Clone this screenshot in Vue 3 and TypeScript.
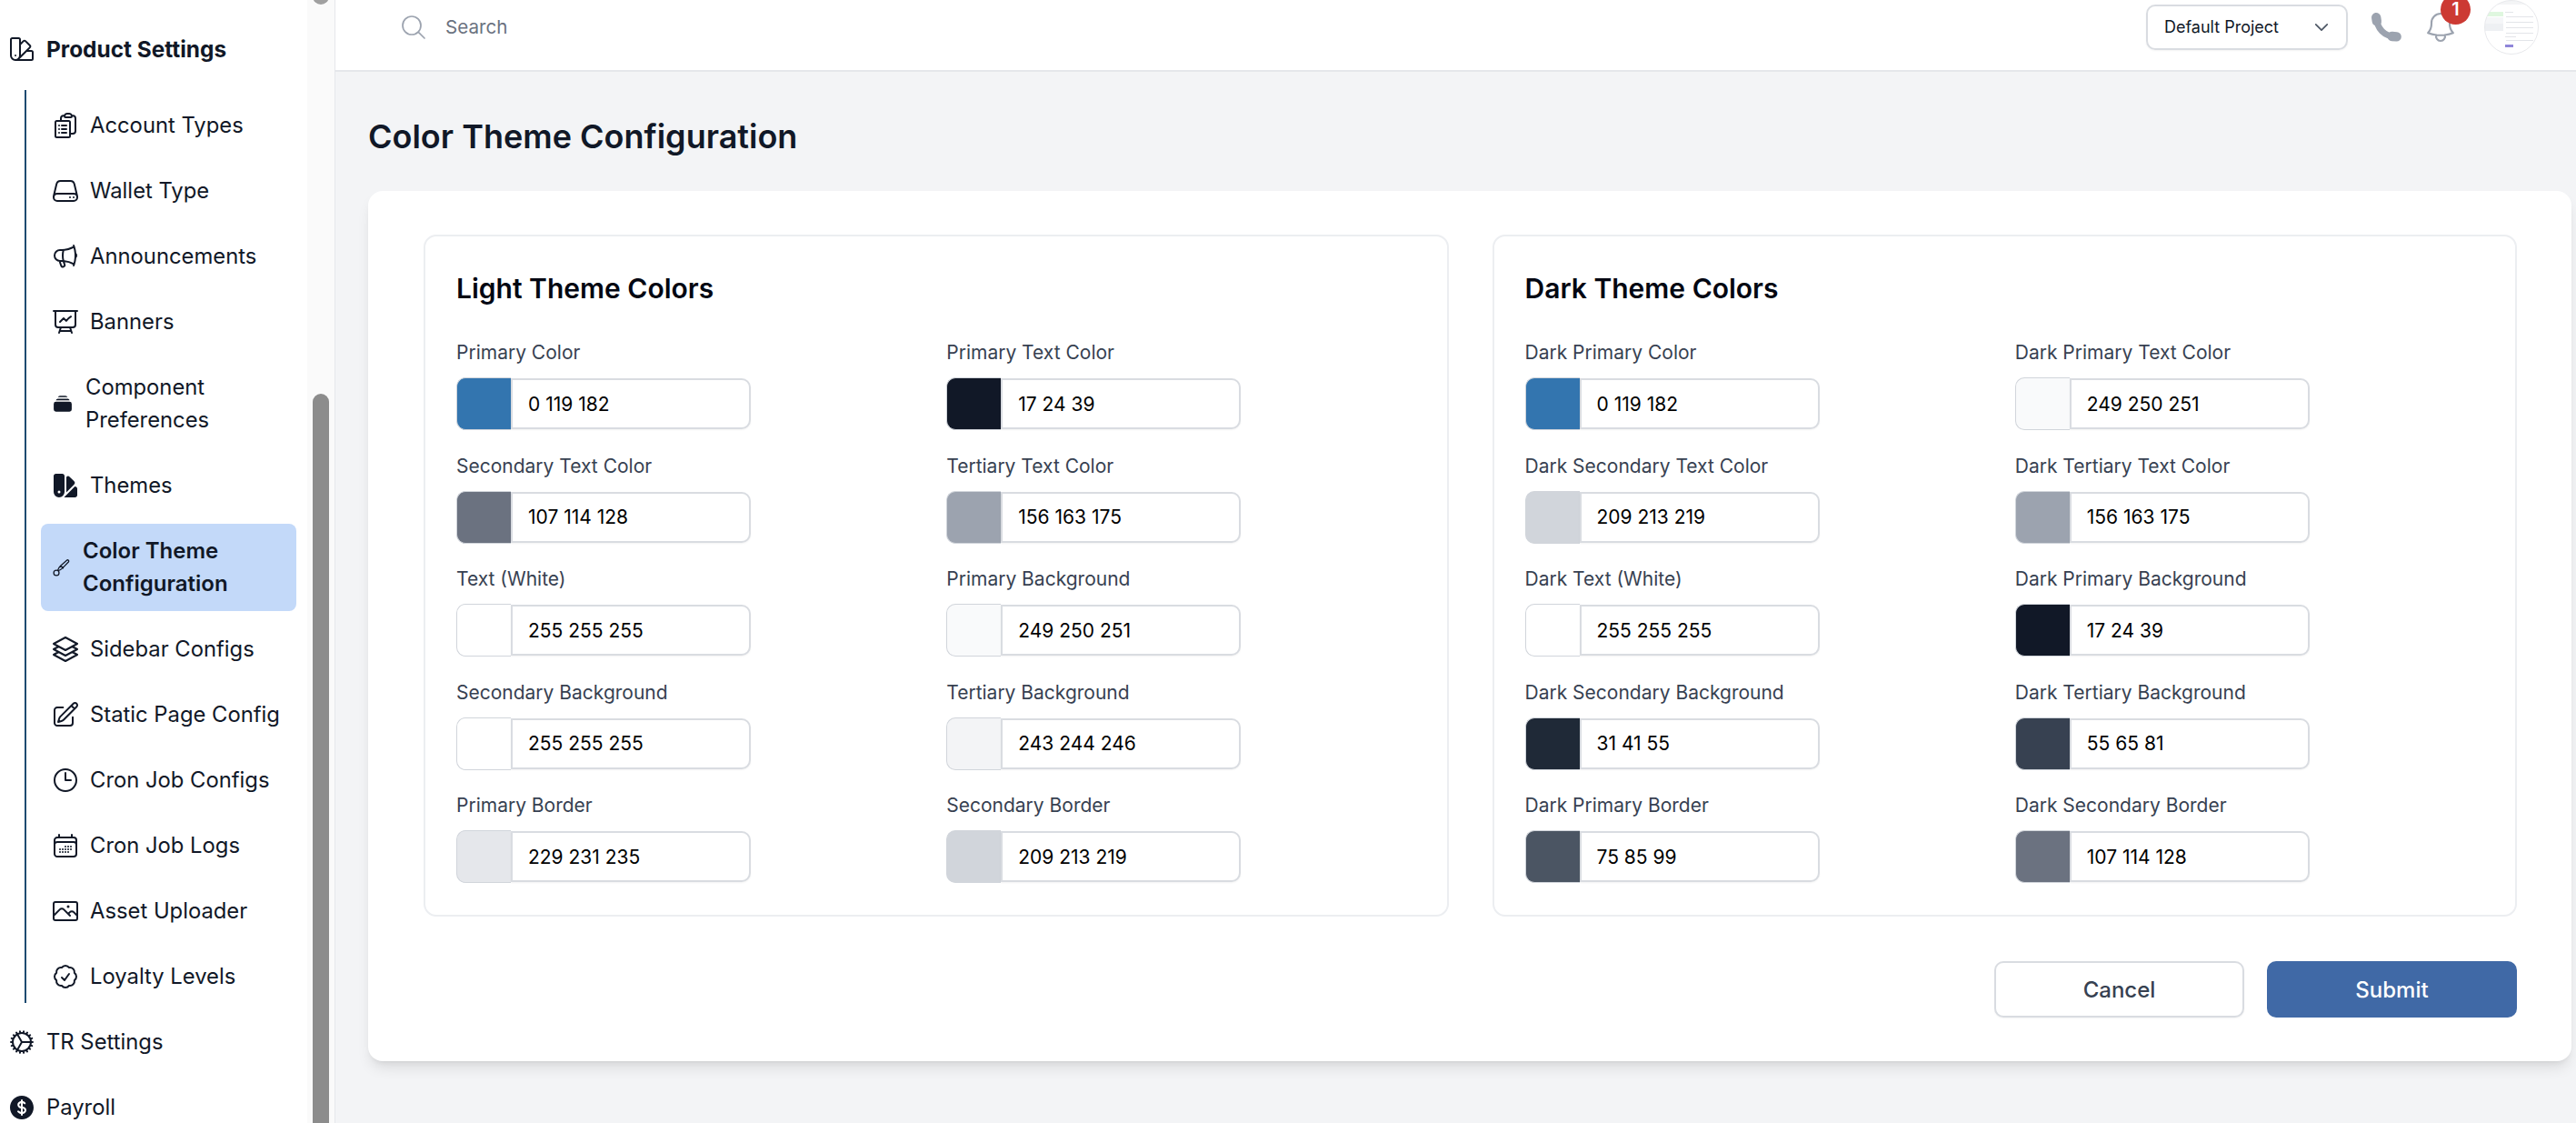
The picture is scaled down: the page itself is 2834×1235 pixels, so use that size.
<template>
  <div class="shell">
    <aside class="sidebar">
      <div class="nav-top bold">
        <svg class="ico" viewBox="0 0 24 24"><path :d="icons.swatch" /></svg>
        <span>Product Settings</span>
      </div>
      <div class="subnav">
        <div
          v-for="item in subItems"
          :key="item.label"
          :class="['nav-sub', item.cls]"
        >
          <svg v-if="item.icon" class="ico" viewBox="0 0 24 24"><path :d="item.icon" /></svg>
          <svg v-else-if="item.cls === 'stack'" class="ico-solid" viewBox="0 0 20 20"><path :d="icons.stack" /></svg>
          <svg v-else-if="item.cls === 'themes'" class="ico-fill" viewBox="0 0 24 24"><path :d="icons.swatchA" fill-rule="evenodd" /><path :d="icons.swatchB" /><path :d="icons.swatchC" /></svg>
          <svg v-else class="ico-brush" viewBox="0 0 24 24"><path :d="icons.brush" /></svg>
          <span>{{ item.label }}</span>
        </div>
      </div>
      <div class="nav-top">
        <svg class="ico" viewBox="0 0 24 24"><path :d="icons.cog" /></svg>
        <span>TR Settings</span>
      </div>
      <div class="nav-top">
        <svg class="ico-fill" viewBox="0 0 24 24"><path :d="icons.dollarA" /><path :d="icons.dollarB" fill-rule="evenodd" /></svg>
        <span>Payroll</span>
      </div>
      <div class="track">
        <div class="thumb thumb-old"></div>
        <div class="thumb thumb-main"></div>
      </div>
    </aside>

    <div class="main">
      <header class="topbar">
        <svg class="search-ico" viewBox="0 0 24 24"><path d="M21 21l-5.197-5.197m0 0A7.5 7.5 0 105.196 5.196a7.5 7.5 0 0010.607 10.607z" /></svg>
        <span class="search-text">Search</span>
        <div class="project">
          <span>Default Project</span>
          <svg viewBox="0 0 24 24"><path d="M19.5 8.25l-7.5 7.5-7.5-7.5" /></svg>
        </div>
        <svg class="phone" viewBox="0 0 24 24"><path class="phone-line" d="M6 6C6 13 11 18 18 18" /><path class="phone-end" d="M5.5 5.5l.4 2.5M16 18l3 .2" /></svg>
        <div class="bell">
          <svg viewBox="0 0 24 24"><path d="M14.857 17.082a23.848 23.848 0 005.454-1.31A8.967 8.967 0 0118 9.75v-.7V9A6 6 0 006 9v.75a8.967 8.967 0 01-2.312 6.022c1.733.64 3.56 1.085 5.455 1.31m5.714 0a24.255 24.255 0 01-5.714 0m5.714 0a3 3 0 11-5.714 0" /></svg>
          <span class="badge">1</span>
        </div>
        <svg class="avatar" viewBox="0 0 60 60">
          <defs><clipPath id="av"><circle cx="30" cy="30" r="29.5" /></clipPath></defs>
          <g clip-path="url(#av)">
            <rect width="60" height="60" fill="#fff" />
            <rect width="60" height="5" fill="#f4f5f6" />
            <rect x="1" y="13" width="20" height="5" fill="#dff7df" />
            <rect x="1" y="19" width="20" height="7" fill="#f5f6f8" />
            <rect x="1" y="26" width="20" height="8" fill="#eef0f3" />
            <g fill="#e3e5e9">
              <rect x="23" y="13" width="9" height="1" />
              <rect x="24" y="18" width="30" height="1" />
              <rect x="24" y="24" width="30" height="1" />
              <rect x="24" y="30" width="30" height="1" />
              <rect x="24" y="36" width="30" height="1" />
              <rect x="23" y="40" width="12" height="1" />
              <rect x="24" y="44" width="30" height="1" />
            </g>
            <rect x="23" y="49" width="9" height="3" fill="#8f86d9" />
          </g>
          <circle cx="30" cy="30" r="29.5" fill="none" stroke="#e8e9ec" />
        </svg>
      </header>

      <main class="body">
        <h1 class="title">Color Theme Configuration</h1>
        <section class="card">
          <div class="panels">
            <div v-for="panel in panels" :key="panel.title" class="panel">
              <h2>{{ panel.title }}</h2>
              <div class="grid">
                <div v-for="f in panel.fields" :key="f.label" class="cell">
                  <label>{{ f.label }}</label>
                  <div class="field">
                    <div class="swatch" :style="{ background: f.show || rgb(f.value) }"></div>
                    <input type="text" readonly :value="f.value" />
                  </div>
                </div>
              </div>
            </div>
          </div>
          <div class="actions">
            <button class="btn cancel">Cancel</button>
            <button class="btn submit">Submit</button>
          </div>
        </section>
      </main>
    </div>
  </div>
</template>

<script setup lang="ts">
interface Field {
  label: string
  value: string
  show?: string
}

const icons = {
  swatch: 'M4.098 19.902a3.75 3.75 0 005.304 0l6.401-6.402M6.75 21A3.75 3.75 0 013 17.25V4.125C3 3.504 3.504 3 4.125 3h5.25c.621 0 1.125.504 1.125 1.125v4.072M6.75 21a3.75 3.75 0 003.75-3.75V8.197M6.75 21h13.125c.621 0 1.125-.504 1.125-1.125v-5.25c0-.621-.504-1.125-1.125-1.125h-4.072M10.5 8.197l2.88-2.88c.438-.439 1.15-.439 1.59 0l3.712 3.713c.44.44.44 1.152 0 1.59l-2.879 2.88M6.75 17.25h.008v.008H6.75v-.008z',
  stack: 'M5.127 3.502L5.25 3.5h9.5c.041 0 .082 0 .123.002A2.251 2.251 0 0012.75 2h-5.5a2.25 2.25 0 00-2.123 1.502zM1 10.25A2.25 2.25 0 013.25 8h13.5A2.25 2.25 0 0119 10.25v5.5A2.25 2.25 0 0116.75 18H3.25A2.25 2.25 0 011 15.75v-5.5zM3.25 6.5c-.04 0-.082 0-.123.002A2.25 2.25 0 015.25 5h9.5c.98 0 1.814.627 2.123 1.502a3.819 3.819 0 00-.123-.002H3.25z',
  swatchA: 'M2.25 4.125c0-1.036.84-1.875 1.875-1.875h5.25c1.036 0 1.875.84 1.875 1.875V17.25a4.5 4.5 0 11-9 0V4.125zm4.5 14.25a1.125 1.125 0 100-2.25 1.125 1.125 0 000 2.25z',
  swatchB: 'M10.719 21.75h9.156c1.036 0 1.875-.84 1.875-1.875v-5.25c0-1.036-.84-1.875-1.875-1.875h-.14l-8.742 8.743c-.09.089-.18.175-.274.257z',
  swatchC: 'M12.738 17.625l6.474-6.474a1.875 1.875 0 000-2.651L15.5 4.787a1.875 1.875 0 00-2.651 0l-.1.099V17.25c0 .126-.003.251-.01.375z',
  brush: 'M8.7 18.5a3.2 3.2 0 1 1-6.4 0 3.2 3.2 0 0 1 6.4 0zM7.6 16.1c2.2-.7 4-2 5.4-3.4l7-7.2c1.3-1.5-.6-3.3-2.1-2l-7.4 6.7c-1.5 1.4-2.7 3.2-3.3 5.2M10.6 9.9l3 3',
  cog: 'M4.5 12a7.5 7.5 0 0015 0m-15 0a7.5 7.5 0 1115 0m-15 0H3m16.5 0H21m-1.5 0H12m-8.457 3.077l1.41-.513m14.095-5.13l1.41-.513M5.106 17.785l1.15-.964m11.49-9.642l1.149-.964M7.501 19.795l.75-1.3m7.5-12.99l.75-1.3m-6.063 16.658l.26-1.477m2.605-14.772l.26-1.477m0 17.726l-.26-1.477M10.698 4.614l-.26-1.477M16.5 19.794l-.75-1.299M7.5 4.205L12 12m6.894 5.785l-1.149-.964M6.256 7.178l-1.15-.964m15.352 8.864l-1.41-.513M4.954 9.435l-1.41-.514M12.002 12l-3.75 6.495',
  dollarA: 'M10.464 8.746c.227-.18.497-.311.786-.394v2.795a2.252 2.252 0 01-.786-.393c-.394-.313-.546-.681-.546-1.004 0-.323.152-.691.546-1.004zM12.75 15.662v-2.824c.347.085.664.228.921.421.427.32.579.686.579.991 0 .305-.152.671-.579.991a2.534 2.534 0 01-.921.42z',
  dollarB: 'M12 2.25c-5.385 0-9.75 4.365-9.75 9.75s4.365 9.75 9.75 9.75 9.75-4.365 9.75-9.75S17.385 2.25 12 2.25zM12.75 6a.75.75 0 00-1.5 0v.816a3.836 3.836 0 00-1.72.756c-.712.566-1.112 1.35-1.112 2.178 0 .829.4 1.612 1.113 2.178.502.4 1.102.647 1.719.756v2.978a2.536 2.536 0 01-.921-.421l-.879-.66a.75.75 0 00-.9 1.2l.879.66c.533.4 1.169.645 1.821.75V18a.75.75 0 001.5 0v-.81a4.124 4.124 0 001.821-.749c.745-.559 1.179-1.344 1.179-2.191 0-.847-.434-1.632-1.179-2.191a4.122 4.122 0 00-1.821-.75V8.354c.29.082.559.213.786.393l.415.33a.75.75 0 00.933-1.175l-.415-.33a3.836 3.836 0 00-1.719-.755V6z',
}

const subItems = [
  { label: 'Account Types', cls: '', icon: 'M9 12h3.75M9 15h3.75M9 18h3.75m3 .75H18a2.25 2.25 0 002.25-2.25V6.108c0-1.135-.845-2.098-1.976-2.192a48.424 48.424 0 00-1.123-.08m-5.801 0c-.065.21-.1.433-.1.664 0 .414.336.75.75.75h4.5a.75.75 0 00.75-.75 2.25 2.25 0 00-.1-.664m-5.8 0A2.251 2.251 0 0113.5 2.25H15c1.012 0 1.867.668 2.15 1.586m-5.8 0c-.376.023-.75.05-1.124.08C9.095 4.01 8.25 4.973 8.25 6.108V8.25m0 0H4.875c-.621 0-1.125.504-1.125 1.125v11.25c0 .621.504 1.125 1.125 1.125h9.75c.621 0 1.125-.504 1.125-1.125V9.375c0-.621-.504-1.125-1.125-1.125H8.25zM6.75 12h.008v.008H6.75V12zm0 3h.008v.008H6.75V15zm0 3h.008v.008H6.75V18z' },
  { label: 'Wallet Type', cls: '', icon: 'M21.75 17.25v-.228a4.5 4.5 0 00-.12-1.03l-2.268-9.64a3.375 3.375 0 00-3.285-2.602H7.923a3.375 3.375 0 00-3.285 2.602l-2.268 9.64a4.5 4.5 0 00-.12 1.03v.228m19.5 0a3 3 0 01-3 3H5.25a3 3 0 01-3-3m19.5 0a3 3 0 00-3-3H5.25a3 3 0 00-3 3m16.5 0h.008v.008h-.008v-.008zm-3 0h.008v.008h-.008v-.008z' },
  { label: 'Announcements', cls: '', icon: 'M10.34 15.84c-.688-.06-1.386-.09-2.09-.09H7.5a4.5 4.5 0 110-9h.75c.704 0 1.402-.03 2.09-.09m0 9.18c.253.962.584 1.892.985 2.783.247.55.06 1.21-.463 1.511l-.657.38c-.551.318-1.26.117-1.527-.461a20.845 20.845 0 01-1.44-4.282m3.102.069a18.03 18.03 0 01-.59-4.59c0-1.586.205-3.124.59-4.59m0 9.18a23.848 23.848 0 018.835 2.535M10.34 6.66a23.847 23.847 0 008.835-2.535m0 0A23.74 23.74 0 0018.795 3m.38 1.125a23.91 23.91 0 011.014 5.395m-1.014 8.855c-.118.38-.245.754-.38 1.125m.38-1.125a23.91 23.91 0 001.014-5.395m0-3.46c.495.413.811 1.035.811 1.73 0 .695-.316 1.317-.811 1.73m0-3.46a24.347 24.347 0 010 3.46' },
  { label: 'Banners', cls: '', icon: 'M3.75 3v11.25A2.25 2.25 0 006 16.5h2.25M3.75 3h-1.5m1.5 0h16.5m0 0h1.5m-1.5 0v11.25A2.25 2.25 0 0118 16.5h-2.25m-7.5 0h7.5m-7.5 0l-1 3m8.5-3l1 3m0 0l.5 1.5m-.5-1.5h-9.5m0 0l-.5 1.5M7.5 12l3-3 2.148 2.148A12.061 12.061 0 0116.5 7.605' },
  { label: 'Component Preferences', cls: 'stack', icon: '' },
  { label: 'Themes', cls: 'themes', icon: '' },
  { label: 'Color Theme Configuration', cls: 'active', icon: '' },
  { label: 'Sidebar Configs', cls: '', icon: 'M6.429 9.75L2.25 12l4.179 2.25m0-4.5l5.571 3 5.571-3m-11.142 0L2.25 7.5 12 2.25l9.75 5.25-4.179 2.25m0 0L21.75 12l-4.179 2.25m0 0l4.179 2.25L12 21.75 2.25 16.5l4.179-2.25m11.142 0l-5.571 3-5.571-3' },
  { label: 'Static Page Config', cls: '', icon: 'M16.862 4.487l1.687-1.688a1.875 1.875 0 112.652 2.652L10.582 16.07a4.5 4.5 0 01-1.897 1.13L6 18l.8-2.685a4.5 4.5 0 011.13-1.897l8.932-8.931zm0 0L19.5 7.125M18 14v4.75A2.25 2.25 0 0115.75 21H5.25A2.25 2.25 0 013 18.75V8.25A2.25 2.25 0 015.25 6H10' },
  { label: 'Cron Job Configs', cls: '', icon: 'M12 6v6h4.5m4.5 0a9 9 0 11-18 0 9 9 0 0118 0z' },
  { label: 'Cron Job Logs', cls: '', icon: 'M6.75 3v2.25M17.25 3v2.25M3 18.75V7.5a2.25 2.25 0 012.25-2.25h13.5A2.25 2.25 0 0121 7.5v11.25m-18 0A2.25 2.25 0 005.25 21h13.5A2.25 2.25 0 0021 18.75m-18 0v-7.5A2.25 2.25 0 015.25 9h13.5A2.25 2.25 0 0121 11.25v7.5m-9-6h.008v.008H12v-.008zM12 15h.008v.008H12V15zm0 2.25h.008v.008H12v-.008zM9.75 15h.008v.008H9.75V15zm0 2.25h.008v.008H9.75v-.008zM7.5 15h.008v.008H7.5V15zm0 2.25h.008v.008H7.5v-.008zm6.75-4.5h.008v.008h-.008v-.008zm0 2.25h.008v.008h-.008V15zm0 2.25h.008v.008h-.008v-.008zm2.25-4.5h.008v.008H16.5v-.008zm0 2.25h.008v.008H16.5V15z' },
  { label: 'Asset Uploader', cls: '', icon: 'M2.25 15.75l5.159-5.159a2.25 2.25 0 013.182 0l5.159 5.159m-1.5-1.5l1.409-1.409a2.25 2.25 0 013.182 0l2.909 2.909m-18 3.75h16.5a1.5 1.5 0 001.5-1.5V6a1.5 1.5 0 00-1.5-1.5H3.75A1.5 1.5 0 002.25 6v12a1.5 1.5 0 001.5 1.5zm10.5-11.25h.008v.008h-.008V8.25zm.375 0a.375.375 0 11-.75 0 .375.375 0 01.75 0z' },
  { label: 'Loyalty Levels', cls: '', icon: 'M9 12.75L11.25 15 15 9.75M21 12c0 1.268-.63 2.39-1.593 3.068a3.745 3.745 0 01-1.043 3.296 3.745 3.745 0 01-3.296 1.043A3.745 3.745 0 0112 21c-1.268 0-2.39-.63-3.068-1.593a3.746 3.746 0 01-3.296-1.043 3.745 3.745 0 01-1.043-3.296A3.745 3.745 0 013 12c0-1.268.63-2.39 1.593-3.068a3.745 3.745 0 011.043-3.296 3.746 3.746 0 013.296-1.043A3.746 3.746 0 0112 3c1.268 0 2.39.63 3.068 1.593a3.746 3.746 0 013.296 1.043 3.746 3.746 0 011.043 3.296A3.745 3.745 0 0121 12z' },
]

const panels: { title: string; fields: Field[] }[] = [
  {
    title: 'Light Theme Colors',
    fields: [
      { label: 'Primary Color', value: '0 119 182', show: '#3375af' },
      { label: 'Primary Text Color', value: '17 24 39' },
      { label: 'Secondary Text Color', value: '107 114 128' },
      { label: 'Tertiary Text Color', value: '156 163 175' },
      { label: 'Text (White)', value: '255 255 255' },
      { label: 'Primary Background', value: '249 250 251' },
      { label: 'Secondary Background', value: '255 255 255' },
      { label: 'Tertiary Background', value: '243 244 246' },
      { label: 'Primary Border', value: '229 231 235' },
      { label: 'Secondary Border', value: '209 213 219' },
    ],
  },
  {
    title: 'Dark Theme Colors',
    fields: [
      { label: 'Dark Primary Color', value: '0 119 182', show: '#3375af' },
      { label: 'Dark Primary Text Color', value: '249 250 251' },
      { label: 'Dark Secondary Text Color', value: '209 213 219' },
      { label: 'Dark Tertiary Text Color', value: '156 163 175' },
      { label: 'Dark Text (White)', value: '255 255 255' },
      { label: 'Dark Primary Background', value: '17 24 39' },
      { label: 'Dark Secondary Background', value: '31 41 55' },
      { label: 'Dark Tertiary Background', value: '55 65 81' },
      { label: 'Dark Primary Border', value: '75 85 99' },
      { label: 'Dark Secondary Border', value: '107 114 128' },
    ],
  },
]

const rgb = (v: string) => `rgb(${v.split(' ').join(',')})`
</script>

<style>
html, body { margin: 0; background: #f3f4f6; }
</style>

<style scoped>
.shell { display: flex; width: 2834px; height: 1235px; overflow: hidden; font-family: Inter, "Liberation Sans", sans-serif; color: #111827; }

.sidebar { position: relative; width: 369px; flex-shrink: 0; box-sizing: border-box; padding-top: 18px; background: #fff; border-right: 1px solid #e5e7eb; overflow: hidden; font-size: 23.8px; line-height: 36px; }
.track { position: absolute; top: 0; bottom: 0; right: 0; width: 30px; background: #fafafa; }
.thumb { position: absolute; left: 6px; width: 18px; background: #8c8c8c; border-radius: 9px; }
.thumb-old { top: -20px; height: 25px; background: #a0a0a0; }
.thumb-main { top: 433px; height: 830px; }

.nav-top { display: flex; align-items: center; gap: 11px; height: 72px; padding-left: 8px; }
.nav-top.bold { font-weight: 700; font-size: 24.4px; }

.subnav { position: relative; margin-top: 9px; padding-top: 3px; margin-left: 45px; width: 281px; }
.subnav::before { content: ""; position: absolute; left: -18px; top: 0; bottom: 7px; width: 2px; background: #1f4b71; }
.nav-sub { display: flex; align-items: center; gap: 11px; padding: 18px 0 18px 11px; }
.nav-sub.stack { gap: 14px; padding-left: 13px; }
.nav-sub.active { gap: 12px; margin: 6px 0; padding: 12px 0 12px 12px; background: #c3d9f9; border-radius: 8px; font-size: 24px; font-weight: 600; }

.ico { width: 32px; height: 32px; flex-shrink: 0; fill: none; stroke: currentColor; stroke-width: 1.5; stroke-linecap: round; stroke-linejoin: round; }
.ico-fill { width: 32px; height: 32px; flex-shrink: 0; fill: currentColor; }
.ico-solid { width: 22px; height: 22px; flex-shrink: 0; fill: currentColor; }
.ico-brush { width: 22px; height: 22px; flex-shrink: 0; fill: none; stroke: currentColor; stroke-width: 1.4; stroke-linecap: round; stroke-linejoin: round; }

.main { flex: 1; min-width: 0; display: flex; flex-direction: column; }

.topbar { display: flex; align-items: center; height: 79px; flex-shrink: 0; box-sizing: border-box; padding: 0 41px 18px 70px; background: #fff; border-bottom: 2px solid #e5e7eb; }
.search-ico { width: 32px; height: 32px; fill: none; stroke: #9ca3af; stroke-width: 1.3; stroke-linecap: round; stroke-linejoin: round; }
.search-text { margin-left: 19px; font-size: 20.6px; color: #6b7280; }
.project { display: flex; align-items: center; justify-content: space-between; margin-left: auto; width: 222px; height: 50px; box-sizing: border-box; padding: 0 17px 0 18px; border: 2px solid #d9dce1; border-radius: 10px; box-shadow: 0 1px 2px rgba(0, 0, 0, .05); font-size: 18px; color: #111827; }
.project svg { width: 20px; height: 20px; fill: none; stroke: #4b5563; stroke-width: 2; stroke-linecap: round; stroke-linejoin: round; }
.phone { width: 40px; height: 40px; margin-left: 22px; fill: none; stroke: #9ca3af; stroke-linecap: round; }
.phone-line { stroke-width: 4.2; }
.phone-end { stroke-width: 6.2; }
.bell { position: relative; width: 40px; height: 40px; margin-left: 20px; }
.bell svg { width: 40px; height: 40px; fill: none; stroke: #9ca3af; stroke-width: 1.3; stroke-linecap: round; stroke-linejoin: round; }
.badge { position: absolute; left: 20px; top: -16px; width: 33px; height: 33px; border-radius: 50%; background: #cc3a33; color: #fff; font-size: 20px; font-weight: 600; line-height: 33px; text-align: center; }
.avatar { width: 60px; height: 60px; margin-left: 28px; }

.body { flex: 1; padding: 0 5px 0 36px; min-height: 0; }
.title { margin: 49px 0 38px; font-size: 36px; line-height: 44px; font-weight: 600; color: #111827; }

.card { padding: 48px 60px 48px 61px; background: #fff; border-radius: 16px; box-shadow: 0 10px 15px -3px rgba(0, 0, 0, .1), 0 4px 6px -4px rgba(0, 0, 0, .1); }
.panels { display: grid; grid-template-columns: 1fr 1fr; gap: 48px; }
.panel { padding: 37px 35px 35px 34px; border: 2px solid #eceef1; border-radius: 14px; }
.panel h2 { margin: 0 0 37px; font-size: 30px; line-height: 40px; font-weight: 600; color: #030712; }
.grid { display: grid; grid-template-columns: 1fr 1fr; gap: 25.6px 24px; }
.cell label { display: block; margin-bottom: 13px; font-size: 21px; line-height: 28px; color: #374151; }
.field { display: flex; align-items: center; width: 324px; }
.swatch { width: 60px; height: 58px; box-sizing: border-box; border: 1px solid #d1d5db; border-right: 0; border-radius: 10px 0 0 10px; flex-shrink: 0; }
.field input { flex: 1; min-width: 0; height: 56px; box-sizing: border-box; padding: 0 17px; border: 2px solid #d9dce1; border-radius: 0 10px 10px 0; box-shadow: 0 1px 2px rgba(0, 0, 0, .05); font-family: inherit; font-size: 21px; color: #000; outline: none; background: #fff; }

.actions { display: flex; justify-content: flex-end; gap: 25px; margin-top: 49px; }
.btn { width: 275px; height: 62px; border-radius: 10px; font-family: inherit; font-size: 24px; font-weight: 500; box-sizing: border-box; }
.cancel { background: #fff; border: 2px solid #d9dce1; color: #374151; box-shadow: 0 1px 2px rgba(0, 0, 0, .05); }
.submit { background: #4069a6; border: 0; color: #fff; }
</style>
